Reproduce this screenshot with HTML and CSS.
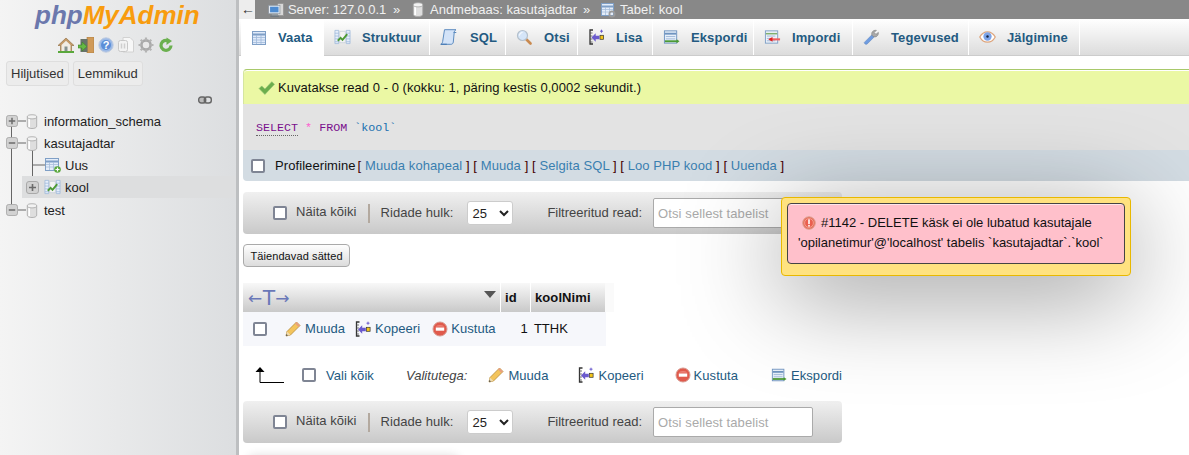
FILE: index.html
```html
<!DOCTYPE html>
<html lang="et">
<head>
<meta charset="utf-8">
<title>phpMyAdmin</title>
<link rel="stylesheet" href="styles.css">
</head>
<body>
<svg class="defs" width="0" height="0" aria-hidden="true">
  <defs>
    <symbol id="i-db" viewBox="0 0 12 16"><path d="M1 3v10c0 1.500 2.200 2.500 5 2.500s5-1 5-2.500V3z" fill="#dedede" stroke="#a8a8a8" stroke-width=".9"/><path d="M3 4.500v9.500" stroke="#fff" stroke-width="1.800"/><ellipse cx="6" cy="3" rx="5" ry="2.200" fill="#f2f2f2" stroke="#a8a8a8" stroke-width=".9"/></symbol>
    <symbol id="i-plus" viewBox="0 0 13 13"><rect x=".5" y=".5" width="12" height="12" rx="2.500" fill="#d2d2d2" stroke="#a9a9a9"/><path d="M3 6.500h7M6.500 3v7" stroke="#6b6b6b" stroke-width="1.600"/></symbol>
    <symbol id="i-minus" viewBox="0 0 13 13"><rect x=".5" y=".5" width="12" height="12" rx="2.500" fill="#d2d2d2" stroke="#a9a9a9"/><path d="M3 6.500h7" stroke="#6b6b6b" stroke-width="1.600"/></symbol>
    <symbol id="i-browse" viewBox="0 0 17 16"><rect x="1.500" y="1.500" width="13" height="13" fill="#dfeafa" stroke="#7f9fc6"/><path d="M2 4.500h12" stroke="#7f9fc6" stroke-width="2"/><path d="M2 7.500h12M2 10h12M2 12.500h12M5.500 5v9M10 5v9" stroke="#9fb9d9" stroke-width=".8"/></symbol>
    <symbol id="i-struct" viewBox="0 0 18 16"><path d="M1 1h4v14H1zM13 1h4v14h-4z" fill="#e6eefa" stroke="#9db8da" stroke-width=".8"/><path d="M1 4h4M1 7h4M1 10h4M1 13h4M13 4h4M13 7h4M13 10h4M13 13h4" stroke="#9db8da" stroke-width=".8"/><path d="M6 2h6v12H6z" fill="#f4f4f4" stroke="#b8c4d2" stroke-width=".6"/><path d="M4 12l3-3 2 2 5-6" fill="none" stroke="#4c9a35" stroke-width="2"/></symbol>
    <symbol id="i-sql" viewBox="0 0 17 16"><path d="M4.500.7h11.500c-1.300.8-1.700 1.700-1.800 3l-.9 9.300c-.2 1.500-1 2.300-2.400 2.300H.8c1.200-.6 1.700-1.500 1.900-3z" fill="#d3e3f8" stroke="#5d8cc0"/><path d="M13.500 3.500h2.800" stroke="#5d8cc0"/><path d="M.8 15.300h6" stroke="#4a7cb5" stroke-width="1.200"/></symbol>
    <symbol id="i-search" viewBox="0 0 17 16"><path d="M10.500 10.500l4 4" stroke="#c98a50" stroke-width="2.600" stroke-linecap="round"/><circle cx="6.500" cy="6.500" r="5" fill="#d5e5f8" stroke="#b4c0cc" stroke-width="1.200"/><path d="M3.500 6.500a3 3 0 0 1 3-3" stroke="#fff" fill="none"/></symbol>
    <symbol id="i-insert" viewBox="0 0 16 16"><path d="M4.500 1H1.500v14h3" fill="none" stroke="#333" stroke-width="1.300"/><path d="M1.500 4h2.500M1.500 7h2.500M1.500 10h2.500M1.500 13h2.500" stroke="#555" stroke-width=".8"/><path d="M3 8.500l4.200-4.200v2.500h3.600v3.400H7.200v2.500z" fill="#6a5acd"/><rect x="11.500" y="6.300" width="3.600" height="4" fill="#f5c518" stroke="#333" stroke-width=".7"/><path d="M13 .7v3M11.500 2.200h3" stroke="#6a5acd" stroke-width="1"/></symbol>
    <symbol id="i-export" viewBox="0 0 18 16"><rect x="1.500" y="1.500" width="13" height="13" fill="#e8f0fa" stroke="#6f94c0"/><path d="M2 4.500h12" stroke="#6f94c0" stroke-width="2"/><path d="M3 7.500h10M3 10h10" stroke="#9fb9d9"/><path d="M2 12.500h13" stroke="#4c9a35" stroke-width="2"/><path d="M14.500 10.500l3 2-3 2z" fill="#4c9a35"/></symbol>
    <symbol id="i-import" viewBox="0 0 18 16"><rect x="1.500" y="1.500" width="13" height="13" fill="#eef3fa" stroke="#7f9fc6"/><path d="M2 4.500h12" stroke="#7fb06f" stroke-width="1.600"/><path d="M3 7h9M3 9.500h4M3 12h9" stroke="#9fb9d9"/><path d="M6 10.500h11" stroke="#f06060" stroke-width="2.200"/><path d="M9 8l-4.500 2.500L9 13z" fill="#e02020"/></symbol>
    <symbol id="i-wrench" viewBox="0 0 18 18"><path d="M1.500 14.500L10 6l2.500 2.500-8 8c-1 1-2 1-3 0s-.9-1.100 0-2z" fill="#6f9ce0" stroke="#5a82bd" stroke-width=".6"/><path d="M9.500 7c-1-3 1-6 5-5.500L12 4l2 2 2.700-2.200c.5 3.700-2.700 6-5.700 4.700z" fill="#a9a9a9" stroke="#7f7f7f" stroke-width=".7"/></symbol>
    <symbol id="i-eye" viewBox="0 0 18 14"><path d="M.8 7C3 3 6 1.500 9 1.500S15 3 17.200 7C15 11 12 12.500 9 12.500S3 11 .8 7z" fill="#fff" stroke="#dda57d" stroke-width="1.300"/><circle cx="9" cy="6.500" r="4.400" fill="#7da4e8"/><circle cx="9" cy="6.500" r="1.300" fill="#15233d"/></symbol>
    <symbol id="i-pencil" viewBox="0 0 16 16"><path d="M1 15l1-4.500L11.500 1l3.500 3.500L5.500 14z" fill="#f3c45c" stroke="#b58a3a" stroke-width=".8"/><path d="M1 15l1-4.500L5.500 14z" fill="#f0dcb0"/><path d="M1 15l.4-2 1.600 1.600z" fill="#444"/><path d="M11.500 1L15 4.500 13.500 6 10 2.500z" fill="#e8a080"/></symbol>
    <symbol id="i-stop" viewBox="0 0 16 16"><circle cx="8" cy="8" r="7" fill="#e05a4c" stroke="#d89a90"/><path d="M3.500 5.500a6 4 0 0 1 9 0" fill="#f09085"/><rect x="3.800" y="6.500" width="8.400" height="3.200" fill="#fff"/></symbol>
    <symbol id="i-error" viewBox="0 0 16 16"><circle cx="8" cy="8" r="7.200" fill="#e8705e" stroke="#d8a090"/><circle cx="8" cy="8" r="5" fill="#ea5f50" stroke="#f5b0a0" stroke-width=".8"/><rect x="7.100" y="3.800" width="1.800" height="5.500" fill="#fff"/><rect x="7.100" y="10.300" width="1.800" height="1.800" fill="#fff"/></symbol>
    <symbol id="i-table-new" viewBox="0 0 16 16"><rect x=".5" y="1.500" width="13" height="12" fill="#e4edf9" stroke="#7f9fc6"/><path d="M1 4.500h12" stroke="#7f9fc6" stroke-width="2"/><path d="M1 7.500h12M1 10h12M4.500 5v8M8.500 5v8" stroke="#a7bedb" stroke-width=".8"/><circle cx="12.500" cy="12.500" r="3.300" fill="#5aa83c"/><path d="M10.500 12.500h4M12.500 10.500v4" stroke="#fff" stroke-width="1.200"/></symbol>
    <symbol id="i-table-cog" viewBox="0 0 16 16"><rect x="1.500" y="1.500" width="12" height="12" fill="#e4edf9" stroke="#7f9fc6"/><path d="M2 4.500h11" stroke="#7f9fc6" stroke-width="2"/><path d="M2 7.500h11M2 10h11M5.500 5v8M9.500 5v8" stroke="#a7bedb" stroke-width=".8"/><circle cx="12" cy="12" r="2.600" fill="none" stroke="#9a9a9a" stroke-width="1.800"/></symbol>
    <symbol id="i-server" viewBox="0 0 17 16"><rect x="10" y="1" width="6.500" height="13" fill="#d8d8d8" stroke="#8a8a8a" stroke-width=".7"/><rect x=".7" y="3" width="12" height="9" fill="#e8eef6" stroke="#8a949e" stroke-width=".8"/><rect x="2.200" y="4.500" width="9" height="6" fill="#4d8bd0"/><rect x="4" y="12.500" width="6" height="1.500" fill="#9aa4ae"/><rect x="2.500" y="14" width="9" height="1.300" fill="#6d7780"/></symbol>
  </defs>
</svg>

<div class="page">
  <aside class="sidebar">
    <div class="logo"><span class="logo-php">php</span><span class="logo-my">MyAdmin</span></div>
    <div class="quick-icons">
      <svg class="qi" viewBox="0 0 16 16"><path d="M8 1L0 8.500h2.500V14.500h11V8.500H16z" fill="#c49a68" stroke="#8d6a3d" stroke-width=".6"/><path d="M3.500 8L8 3.800 12.500 8v6.500h-9z" fill="#f0ece4"/><rect x="6.500" y="9.500" width="3" height="5" fill="#85918f"/><path d="M0 15h16" stroke="#5aa83c" stroke-width="2"/></svg>
      <svg class="qi" viewBox="0 0 16 16"><rect x="9" y="0" width="7" height="16" fill="#d09a58" stroke="#a67a42" stroke-width=".6"/><rect x="2.500" y="2" width="7" height="13" fill="#67736a"/><path d="M0 8h4V5l5 4.500L4 14v-3H0z" fill="#66b845" stroke="#3a8427" stroke-width=".6"/></svg>
      <svg class="qi" viewBox="0 0 16 16"><circle cx="8" cy="8" r="7.200" fill="#9bb9e6" stroke="#bfcce0"/><circle cx="8" cy="8" r="5" fill="#5b8ed8"/><text class="qi-help" x="8" y="11.500" text-anchor="middle">?</text></svg>
      <svg class="qi" viewBox="0 0 16 16"><path d="M5 .5h7l3.500 3.500v11H5z" fill="#f7f7f7" stroke="#d2d2d2"/><rect x=".5" y="3.500" width="9" height="11" rx="2" fill="#f3f3f3" stroke="#c8c8c8"/><path d="M3.500 6.500v5M6.500 6.500v5" stroke="#cfcfcf" stroke-width="1.500"/></svg>
      <svg class="qi" viewBox="0 0 16 16"><circle cx="8" cy="8" r="4.600" fill="#e8e8e8" stroke="#a8a8a8" stroke-width="2.600"/><path d="M8 .5v3M8 12.500v3M.5 8h3M12.500 8h3M2.700 2.700l2.100 2.100M11.200 11.200l2.100 2.100M2.700 13.300l2.100-2.100M11.200 4.800l2.100-2.100" stroke="#b4b4b4" stroke-width="2.200"/></svg>
      <svg class="qi" viewBox="0 0 16 16"><path d="M13 8.500A5 5 0 1 1 10.500 4" fill="none" stroke="#6bb04f" stroke-width="3.200"/><path d="M8.500 .5l5.500 3.500-5.500 4z" fill="#6bb04f"/></svg>
    </div>
    <div class="nav-tabs">
      <span class="nav-btn">Hiljutised</span>
      <span class="nav-btn">Lemmikud</span>
    </div>
    <div class="link-row">
      <svg class="link-icon" viewBox="0 0 14 8"><rect x=".7" y="1" width="7" height="6" rx="2.500" fill="#bbb" stroke="#666" stroke-width="1.400"/><rect x="6.300" y="1" width="7" height="6" rx="2.500" fill="none" stroke="#666" stroke-width="1.400"/></svg>
    </div>
    <div class="tree">
      <svg class="tree-lines" viewBox="0 0 236 110" aria-hidden="true">
        <path d="M11.500 11v88M18 11h8M18 33h8M32.500 33v55M32.500 55h13M39 77h5M18 100h8" fill="none" stroke="#666" stroke-width="1"/>
      </svg>
      <div class="tree-row"><svg class="exp"><use href="#i-plus"/></svg><svg class="db"><use href="#i-db"/></svg><span>information_schema</span></div>
      <div class="tree-row"><svg class="exp"><use href="#i-minus"/></svg><svg class="db"><use href="#i-db"/></svg><span>kasutajadtar</span></div>
      <div class="tree-row tree-new"><svg class="tbl"><use href="#i-table-new"/></svg><span>Uus</span></div>
      <div class="tree-row tree-sel"><svg class="exp"><use href="#i-plus"/></svg><svg class="struct"><use href="#i-struct"/></svg><span>kool</span></div>
      <div class="tree-row"><svg class="exp"><use href="#i-minus"/></svg><svg class="db"><use href="#i-db"/></svg><span>test</span></div>
    </div>
  </aside>

  <main class="main">
    <div class="crumbs">
      <span class="back">←</span>
      <span class="crumb crumb-server"><svg class="ci"><use href="#i-server"/></svg>Server: 127.0.0.1</span>
      <span class="sep sep-a">»</span>
      <span class="crumb crumb-db"><svg class="ci ci-db"><use href="#i-db"/></svg>Andmebaas: kasutajadtar</span>
      <span class="sep sep-b">»</span>
      <span class="crumb"><svg class="ci"><use href="#i-table-cog"/></svg>Tabel: kool</span>
    </div>
    <nav class="tabs">
      <a class="tab active"><svg><use href="#i-browse"/></svg>Vaata</a>
      <a class="tab"><svg><use href="#i-struct"/></svg>Struktuur</a>
      <a class="tab tab-sql"><svg><use href="#i-sql"/></svg>SQL</a>
      <a class="tab"><svg><use href="#i-search"/></svg>Otsi</a>
      <a class="tab"><svg><use href="#i-insert"/></svg>Lisa</a>
      <a class="tab"><svg><use href="#i-export"/></svg>Ekspordi</a>
      <a class="tab"><svg><use href="#i-import"/></svg>Impordi</a>
      <a class="tab"><svg><use href="#i-wrench"/></svg>Tegevused</a>
      <a class="tab"><svg><use href="#i-eye"/></svg>Jälgimine</a>
    </nav>

    <section class="content">
      <div class="success"><svg class="check" viewBox="0 0 16 16"><path d="M1 9l2.500-2.500L6.500 9.500 13 2.500l2.500 2.500-9 9.500z" fill="#6cae4c" stroke="#8cc070" stroke-width=".6"/></svg>Kuvatakse read 0 - 0 (kokku: 1, päring kestis 0,0002 sekundit.)</div>
      <div class="sql"><span class="kw kw-first">SELECT</span> <span class="star">*</span> <span class="kw">FROM</span> <span class="ident">`kool`</span></div>
      <div class="profile">
        <input class="cb" type="checkbox">
        <span>Profileerimine</span>
        <span class="links"><b>[</b> <a>Muuda kohapeal</a> <b>]</b> <b>[</b> <a>Muuda</a> <b>]</b> <b>[</b> <a>Selgita SQL</a> <b>]</b> <b>[</b> <a>Loo PHP kood</a> <b>]</b> <b>[</b> <a>Uuenda</a> <b>]</b></span>
      </div>

      <div class="navbar">
        <input class="cb" type="checkbox"><span class="show-all">Näita kõiki</span>
        <span class="divider"></span>
        <span class="nav-label">Ridade hulk:</span>
        <select class="rows"><option>25</option></select>
        <span class="nav-label filter-label">Filtreeritud read:</span>
        <input class="filter" type="text" placeholder="Otsi sellest tabelist">
      </div>

      <button class="more" type="button">Täiendavad sätted</button>

      <div class="grid">
        <div class="g-head">
          <div class="g-actions"><span class="g-arrows"><span class="g-arrow">←</span><span class="g-t">T</span><span class="g-arrow">→</span></span><span class="g-sort"></span></div>
          <div class="g-id">id</div>
          <div class="g-name">koolNimi</div>
          <div class="g-extra"></div>
        </div>
        <div class="g-row">
          <input class="cb" type="checkbox">
          <a class="act act-edit"><svg><use href="#i-pencil"/></svg>Muuda</a>
          <a class="act act-copy"><svg><use href="#i-insert"/></svg>Kopeeri</a>
          <a class="act act-del"><svg><use href="#i-stop"/></svg>Kustuta</a>
          <span class="g-val-id">1</span>
          <span class="g-val-name">TTHK</span>
        </div>
      </div>

      <div class="bulk">
        <svg class="bulk-arrow" viewBox="0 0 30 16"><path d="M5 15.500h24M5 15.500V4" fill="none" stroke="#000"/><path d="M5 0L.5 5h9z" fill="#000"/></svg>
        <input class="cb" type="checkbox">
        <a class="bulk-all">Vali kõik</a>
        <i class="bulk-with">Valitutega:</i>
        <a class="act bulk-edit"><svg><use href="#i-pencil"/></svg>Muuda</a>
        <a class="act bulk-copy"><svg><use href="#i-insert"/></svg>Kopeeri</a>
        <a class="act bulk-del"><svg><use href="#i-stop"/></svg>Kustuta</a>
        <a class="act bulk-exp"><svg><use href="#i-export"/></svg>Ekspordi</a>
      </div>

      <div class="navbar navbar-bottom">
        <input class="cb" type="checkbox"><span class="show-all">Näita kõiki</span>
        <span class="divider"></span>
        <span class="nav-label">Ridade hulk:</span>
        <select class="rows"><option>25</option></select>
        <span class="nav-label filter-label">Filtreeritud read:</span>
        <input class="filter" type="text" placeholder="Otsi sellest tabelist">
      </div>
      <div class="next-shadow"></div>
    </section>

    <div class="popup">
      <div class="popup-inner"><svg class="err"><use href="#i-error"/></svg>#1142 - DELETE käsk ei ole lubatud kasutajale 'opilanetimur'@'localhost' tabelis `kasutajadtar`.`kool`</div>
    </div>
  </main>
</div>
</body>
</html>
```

FILE: styles.css
```css
* { box-sizing: border-box; }
html, body { margin: 0; height: 100%; overflow: hidden; background: #fff; }
body { font-family: "Liberation Sans", Arial, sans-serif; font-size: 12px; color: #111; }
.defs { position: absolute; }
.page { display: flex; width: 1189px; height: 455px; overflow: hidden; }

/* Sidebar */
.sidebar { width: 239px; height: 455px; flex: none; background: linear-gradient(to right, #f4f4f4, #dcdee0); border-right: 3px solid #bdbfc1; }
.logo { height: 34px; padding: 0 0 0 35px; font: italic bold 26px/30px "Liberation Sans", sans-serif; }
.logo-php { color: #6b78ad; }
.logo-my { color: #f89c0e; }
.quick-icons { display: flex; align-items: flex-start; gap: 4px; padding: 3px 0 0 58px; height: 27px; }
.qi { width: 16px; height: 16px; flex: none; }
.qi-help { font: bold 11px "Liberation Sans", sans-serif; fill: #fff; }
.nav-tabs { display: flex; gap: 4px; padding: 0 0 0 6px; }
.nav-btn { height: 25px; padding: 0 4px; line-height: 23px; font-size: 13px; color: #333; background: #ececec; border: 1px solid #dedede; border-radius: 3px; }
.link-row { display: flex; justify-content: flex-end; padding: 9px 24px 0 0; height: 24px; }
.link-icon { width: 14px; height: 8px; margin-top: 1px; }
.tree { position: relative; }
.tree-lines { position: absolute; left: 0; top: 0; width: 236px; height: 110px; }
.tree-row { position: relative; display: flex; align-items: center; height: 22px; padding-left: 6px; font-size: 13px; color: #222; }
.tree-row:last-child { margin-top: 1px; }
.exp { width: 12px; height: 12px; flex: none; }
.db { width: 12px; height: 15px; flex: none; margin: 0 6px 0 8px; }
.tree-new { padding-left: 45px; }
.tbl { width: 16px; height: 16px; margin-right: 4px; flex: none; }
.tree-sel { margin-left: 22px; padding-left: 4px; background: #dddedf; }
.tree-sel .exp { width: 13px; height: 13px; }
.struct { width: 17px; height: 16px; margin: 0 4px 0 5px; flex: none; }

/* Main */
.main { position: relative; flex: 1; min-width: 0; }
.crumbs { display: flex; align-items: center; height: 19px; background: #888; color: #f0f0f0; font-size: 13px; letter-spacing: .05px; white-space: nowrap; }
.back { width: 16px; height: 19px; margin-right: 13px; padding-left: 2px; background: #ededed; color: #333; font-size: 14px; line-height: 18px; }
.crumb { display: flex; align-items: center; gap: 4px; }
.crumb-server { letter-spacing: -.1px; }
.crumb-db { letter-spacing: -.02px; }
.sep { padding-left: 7px; }
.sep-a { width: 26px; }
.sep-b { width: 23px; padding-left: 6px; }
.ci { width: 16px; height: 16px; flex: none; }
.ci-db { width: 12px; height: 15px; margin-right: 2px; }

.tabs { display: flex; height: 37px; margin-bottom: 13px; padding-left: 2px; background: linear-gradient(#fff, #dcdcdc); border-bottom: 1px solid #ccc; }
.tab { display: flex; align-items: center; gap: 11px; height: 36px; padding: 0 9px 0 10px; border-right: 1px solid #fff; color: #235a81; font-weight: bold; font-size: 13px; letter-spacing: .1px; white-space: nowrap; background: linear-gradient(#fff, #dcdcdc); }
.tab svg { width: 17px; height: 16px; flex: none; }
.tab.active { height: 37px; background: #fff; gap: 10px; }
.tab-sql { gap: 13px; }
.tab:nth-child(1) { width: 83px; }
.tab:nth-child(2) { width: 106px; }
.tab:nth-child(3) { width: 76px; }
.tab:nth-child(4) { width: 72px; }
.tab:nth-child(5) { width: 75px; }
.tab:nth-child(6) { width: 101px; }
.tab:nth-child(7) { width: 99px; }
.tab:nth-child(8) { width: 116px; }
.tab:nth-child(9) { width: 111px; }

.content { padding-left: 4px; }
.success { display: flex; align-items: center; height: 35px; padding-left: 14px; background: #ebf8a4; border-top: 1px solid #a8c96a; border-left: 1px solid #d5e5a0; border-radius: 4px 0 0 0; font-size: 13px; letter-spacing: .05px; box-shadow: inset 0 1px 0 #fff; white-space: nowrap; }
.check { width: 17px; height: 17px; margin-right: 3px; flex: none; }
.sql { height: 46px; padding: 17px 0 0 13px; background: #e3e3e3; font: 11.700px/14px "Liberation Mono", monospace; color: #444; white-space: nowrap; }
.kw { color: #7a0f8c; }
.kw-first { border-bottom: 1px dotted #666; }
.star { color: #ff5ed0; }
.ident { color: #1a6fb0; }
.profile { display: flex; align-items: center; height: 31px; padding-left: 8px; background: #d3dce3; border-radius: 0 0 0 4px; font-size: 13px; letter-spacing: .08px; white-space: nowrap; }
.profile .cb { margin-right: 10px; }
.links { margin-left: 2px; }
.links b { font-weight: normal; color: #400; }
.links a { color: #3a7fb0; }

.cb { appearance: none; -webkit-appearance: none; width: 14px; height: 14px; margin: 0; flex: none; background: #fff; border: 2px solid #7f8594; border-radius: 2px; }
.navbar { display: flex; align-items: center; width: 599px; height: 42px; margin-top: 11px; padding-left: 30px; background: linear-gradient(#f0f0f0, #c9c9c9); border-radius: 4px; font-size: 13px; letter-spacing: .05px; color: #444; white-space: nowrap; }
.show-all { margin-left: 9px; padding-bottom: 4px; }
.nav-label { padding-bottom: 2px; }
.divider { width: 2px; height: 19px; margin: 1px 11px 0 11px; background: #b3a99f; }
.rows { width: 46px; height: 24px; margin-left: 14px; font: 13px "Liberation Sans", sans-serif; color: #222; background: #fff; border: 1px solid #ccc; border-radius: 3px; }
.filter-label { margin-left: 34px; letter-spacing: 0; }
.filter { width: 160px; height: 30px; margin-left: 11px; padding: 0 4px; font: 13px "Liberation Sans", sans-serif; letter-spacing: .1px; background: #fff; border: 1px solid #aaa; border-radius: 2px; }
.filter::placeholder { color: #aaa; }
.more { display: block; height: 23px; width: 107px; margin-top: 10px; padding: 0; font: 11px "Liberation Sans", sans-serif; letter-spacing: .1px; color: #111; background: linear-gradient(#fefefe, #dcdcdc); border: 1px solid #aaa; border-radius: 4px; }

.grid { width: 372px; margin-top: 16px; }
.g-head { display: flex; height: 29px; font-weight: bold; font-size: 13px; letter-spacing: .1px; }
.g-actions { display: flex; justify-content: space-between; width: 257px; background: linear-gradient(#f8f8f8, #c9c9c9); color: #6a78b8; }
.g-arrows { display: flex; align-items: center; height: 29px; padding: 1px 0 0 5px; font-weight: normal; line-height: 1; }
.g-arrow { font: 17px/1 "DejaVu Sans", sans-serif; }
.g-t { font-size: 22px; letter-spacing: -.5px; }
.g-sort { width: 0; height: 0; margin: 8px 4px 0 0; border: 6px solid transparent; border-top: 7px solid #555; border-bottom: 0; }
.g-id, .g-name { line-height: 29px; padding-left: 4px; border-left: 1px solid #fff; background: linear-gradient(#f8f8f8, #c9c9c9); }
.g-id { width: 30px; }
.g-name { width: 75px; }
.g-extra { width: 9px; background: #fafafa; }
.g-row { display: flex; align-items: center; width: 363px; height: 34px; padding: 0 0 1px 10px; background: #f6f7fb; font-size: 13px; letter-spacing: .05px; white-space: nowrap; }
.g-row .cb { margin-right: 18px; }
.act { display: inline-flex; align-items: center; gap: 4px; color: #235a81; }
.act svg { width: 16px; height: 16px; flex: none; }
.act-edit { margin-right: 10px; }
.act-copy { margin-right: 12px; }
.act-del { gap: 3px; margin-right: 25px; }
.g-val-name { margin-left: 6px; letter-spacing: 0; }

.bulk { display: flex; align-items: center; height: 30px; margin-top: 14px; font-size: 13px; letter-spacing: .05px; white-space: nowrap; }
.bulk-arrow { width: 30px; height: 16px; margin-left: 12px; flex: none; }
.bulk .cb { margin-left: 17px; }
.bulk-all { margin-left: 10px; color: #235a81; }
.bulk-with { margin-left: 32px; color: #444; }
.bulk-edit { margin-left: 21px; }
.bulk-copy { margin-left: 30px; }
.bulk-del { gap: 3px; margin-left: 31px; }
.bulk-exp { margin-left: 33px; }
.navbar-bottom { margin-top: 11px; }
.next-shadow { width: 215px; height: 40px; margin: 12px 0 0 3px; background: #fff; box-shadow: 0 0 10px rgba(0,0,0,.12); border-radius: 10px; }

/* Error popup */
.popup { position: absolute; left: 542px; top: 197px; width: 350px; height: 79px; padding: 5px 5px 0; background: #ffe280; border: 1px solid #e8b800; border-radius: 4px; box-shadow: 0 18px 100px rgba(0,0,0,.42); }
.popup-inner { height: 61px; padding: 9px 10px 0 10px; line-height: 20px; font-size: 13px; color: #111; background: #ffc0cb; border: 1px solid #444; border-radius: 4px; box-shadow: inset 0 1px 0 #ffe6ea; }
.err { width: 14px; height: 14px; margin: 0 5px -3px 4px; }
```
